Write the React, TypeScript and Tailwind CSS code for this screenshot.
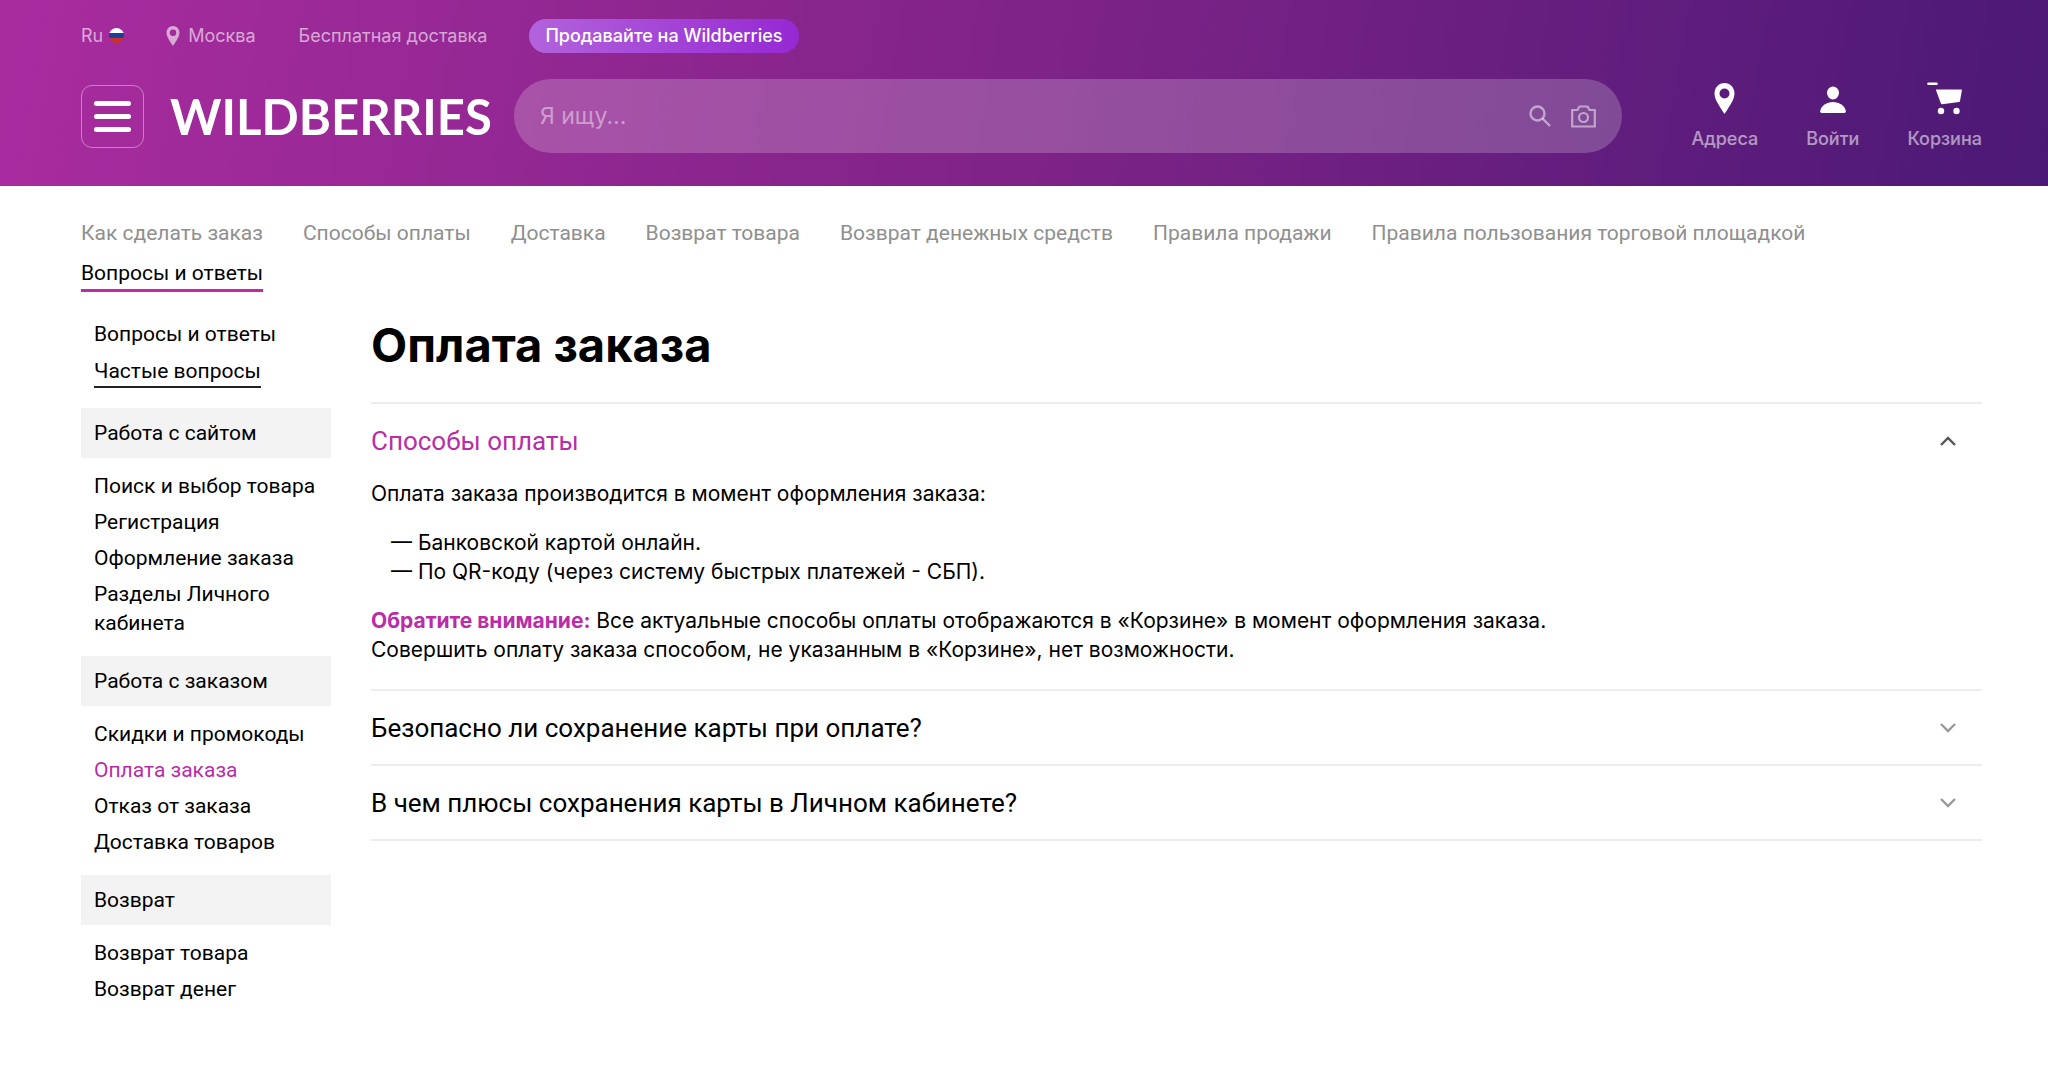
import { useState } from "react";
import type { ReactNode } from "react";

const nav = [
  "Как сделать заказ",
  "Способы оплаты",
  "Доставка",
  "Возврат товара",
  "Возврат денежных средств",
  "Правила продажи",
  "Правила пользования торговой площадкой",
  "Вопросы и ответы",
];

const sections = [
  {
    title: "Работа с сайтом",
    items: ["Поиск и выбор товара", "Регистрация", "Оформление заказа", "Разделы Личного кабинета"],
  },
  {
    title: "Работа с заказом",
    items: ["Скидки и промокоды", "Оплата заказа", "Отказ от заказа", "Доставка товаров"],
  },
  { title: "Возврат", items: ["Возврат товара", "Возврат денег"] },
];

function Pin({ className }: { className: string }) {
  return (
    <svg viewBox="0 0 20 31" className={className} fill="currentColor" aria-hidden="true">
      <path
        fillRule="evenodd"
        d="M10 0C4.400 0 0 4.400 0 10.500c0 6 4.500 12 10 20.500 5.500-8.500 10-14.500 10-20.500C20 4.400 15.600 0 10 0Zm0 5.500a5 5 0 1 1 0 10 5 5 0 0 1 0-10Z"
      />
    </svg>
  );
}

function Flag() {
  return (
    <svg viewBox="0 0 15 17" className="h-[17px] w-[15px]" aria-hidden="true">
      <clipPath id="flag">
        <circle cx="7.500" cy="7.500" r="7.500" />
      </clipPath>
      <g clipPath="url(#flag)">
        <path fill="#fff" d="M0 0h15v5H0z" />
        <path fill="#1c3f9e" d="M0 5h15v5H0z" />
        <path fill="#c8322b" d="M0 10h15v5H0z" />
      </g>
    </svg>
  );
}

function User() {
  return (
    <svg viewBox="0 0 26 32" className="h-8 w-[26px]" fill="currentColor" aria-hidden="true">
      <ellipse cx="13" cy="10" rx="6" ry="6.500" />
      <path d="M1.800 30h22.400c1.200 0 1.800-.7 1.600-1.900C24.600 22.500 19.500 19 13 19S1.400 22.500.2 28.100C0 29.300.6 30 1.800 30Z" />
    </svg>
  );
}

function Cart() {
  return (
    <svg viewBox="0 0 35 33" className="h-[33px] w-[35px]" fill="currentColor" aria-hidden="true">
      <path d="M1.500 1.800h8" stroke="currentColor" strokeWidth="2.600" strokeLinecap="round" />
      <path d="M9.500 7.500h24.500c.7 0 1 .4.900 1l-1.900 10.500c-.1.600-.4.900-1 1l-16.800 2.300c-.7.100-1.100-.2-1.300-.8l-4.800-13c-.2-.6 0-1 .4-1Z" />
      <circle cx="14" cy="29" r="3.200" />
      <circle cx="29.500" cy="29" r="3.200" />
    </svg>
  );
}

function HeaderLink({ label, children }: { label: string; children: ReactNode }) {
  return (
    <a href="#" className="flex flex-col items-center gap-3 pt-px">
      <span className="flex h-8 items-center text-white">{children}</span>
      <span className="text-[18px] leading-6 font-medium text-white/55">{label}</span>
    </a>
  );
}

function Question({
  title,
  defaultOpen = false,
  children,
}: {
  title: string;
  defaultOpen?: boolean;
  children?: ReactNode;
}) {
  const [open, setOpen] = useState(defaultOpen);

  return (
    <section className="border-b-2 border-[#ededed]">
      <h2>
        <button
          onClick={() => setOpen(!open)}
          aria-expanded={open}
          className={
            "flex h-[73px] w-full items-center justify-between pr-[26px] text-left text-[26px] leading-8 " +
            (open ? "text-[#bb2ca8]" : "text-black")
          }
        >
          {title}
          <svg
            viewBox="0 0 16 10"
            className={"h-[10px] w-4 " + (open ? "rotate-180 text-[#555]" : "text-[#999]")}
            fill="none"
            stroke="currentColor"
            strokeWidth="2.400"
            aria-hidden="true"
          >
            <path d="m1 1 7 7 7-7" />
          </svg>
        </button>
      </h2>
      {open && children}
    </section>
  );
}

export default function App() {
  return (
    <div className="min-h-screen bg-white font-[Roboto,sans-serif] text-[21px] leading-[29px] text-black">
      <header className="bg-linear-[100deg,#a92c9f,#7f2388_50%,#4b1975] pr-[66px] pb-[33px] pl-[81px] font-[Inter,sans-serif]">
        <div className="flex h-[72px] items-center text-[18px] leading-6 text-white/60">
          <a href="#" className="flex items-center gap-1.5">
            Ru <Flag />
          </a>
          <a href="#" className="ml-[42px] flex items-center gap-2">
            <Pin className="h-5 w-3.5" />
            Москва
          </a>
          <a href="#" className="ml-[43px]">
            Бесплатная доставка
          </a>
          <a
            href="#"
            className="ml-[42px] rounded-full bg-linear-[90deg,#b263dc,#9628d3] px-4 py-[5px] font-medium text-white"
          >
            Продавайте на Wildberries
          </a>
        </div>

        <div className="mt-[7px] flex items-center">
          <button
            aria-label="Меню"
            className="flex size-[63px] flex-col items-center justify-center gap-2 rounded-[11px] border border-white/40"
          >
            <span className="h-[5px] w-[37px] rounded-full bg-white" />
            <span className="h-[5px] w-[37px] rounded-full bg-white" />
            <span className="h-[5px] w-[37px] rounded-full bg-white" />
          </button>
          <a
            href="#"
            className="ml-[26px] w-[320px] font-[Lato,sans-serif] text-[49px] leading-[60px] font-bold text-white"
          >
            WILDBERRIES
          </a>
          <form className="ml-6 flex h-[74px] flex-1 items-center gap-5 rounded-full bg-white/20 pr-[26px] pl-[26px] text-white/50">
            <input
              type="text"
              aria-label="Я ищу..."
              placeholder="Я ищу..."
              className="min-w-0 flex-1 bg-transparent text-[23px] leading-8 text-white outline-none placeholder:text-white/45"
            />
            <button type="button" aria-label="Найти">
              <svg viewBox="0 0 22 22" className="size-[22px]" fill="none" stroke="currentColor" strokeWidth="2.400">
                <circle cx="8.500" cy="8.500" r="7" />
                <path d="m13.500 13.500 7.500 7.500" />
              </svg>
            </button>
            <button type="button" aria-label="Поиск по фото">
              <svg
                viewBox="0 0 25 23"
                className="h-[23px] w-[25px]"
                fill="none"
                stroke="currentColor"
                strokeWidth="2.200"
              >
                <path d="M1.200 5h5.300l2-3.500h8l2 3.500h5.300v16.500H1.200Z" />
                <circle cx="12.500" cy="12.500" r="4.500" />
              </svg>
            </button>
          </form>
          <div className="ml-[69px] flex gap-12">
            <HeaderLink label="Адреса">
              <Pin className="h-[31px] w-[21px]" />
            </HeaderLink>
            <HeaderLink label="Войти">
              <User />
            </HeaderLink>
            <HeaderLink label="Корзина">
              <Cart />
            </HeaderLink>
          </div>
        </div>
      </header>

      <div className="pr-[66px] pl-[81px]">
        <nav className="flex flex-wrap gap-x-10 gap-y-[7px] pt-[33px]">
          {nav.map((item) => (
            <a
              key={item}
              href="#"
              className={
                item === "Вопросы и ответы"
                  ? "border-b-[3px] border-[#bb2ca8] pb-px text-black"
                  : "border-b-[3px] border-transparent pb-px text-[#8f8f8f]"
              }
            >
              {item}
            </a>
          ))}
        </nav>

        <div className="mt-7 flex items-start gap-10">
          <aside className="w-[250px] shrink-0">
            <div className="flex flex-col items-start gap-2 px-[13px] pb-0.5">
              <a href="#">Вопросы и ответы</a>
              <a href="#" className="border-b-2 border-[#222]">
                Частые вопросы
              </a>
            </div>
            {sections.map((section) => (
              <div key={section.title} className="mt-[18px]">
                <h3 className="bg-[#f3f3f3] px-[13px] py-[11px] leading-7">{section.title}</h3>
                <ul className="mt-3.5 flex flex-col gap-[7px] pl-[13px]">
                  {section.items.map((item) => (
                    <li key={item}>
                      <a href="#" className={item === "Оплата заказа" ? "text-[#bb2ca8]" : ""}>
                        {item}
                      </a>
                    </li>
                  ))}
                </ul>
              </div>
            ))}
          </aside>

          <main className="min-w-0 flex-1">
            <h1 className="border-b-2 border-[#ededed] pb-8 font-[Inter,sans-serif] text-[47px] leading-[50px] font-bold">
              Оплата заказа
            </h1>
            <Question title="Способы оплаты" defaultOpen>
              <div className="flex flex-col gap-5 pt-0.5 pb-[25px] font-[Inter,sans-serif]">
                <p>Оплата заказа производится в момент оформления заказа:</p>
                <ul className="pl-5">
                  <li>— Банковской картой онлайн.</li>
                  <li>— По QR-коду (через систему быстрых платежей - СБП).</li>
                </ul>
                <p>
                  <b className="font-bold text-[#bb2ca8]">Обратите внимание:</b> Все актуальные способы оплаты
                  отображаются в «Корзине» в момент оформления заказа.
                  <br />
                  Совершить оплату заказа способом, не указанным в «Корзине», нет возможности.
                </p>
              </div>
            </Question>
            <Question title="Безопасно ли сохранение карты при оплате?" />
            <Question title="В чем плюсы сохранения карты в Личном кабинете?" />
          </main>
        </div>
      </div>
    </div>
  );
}
